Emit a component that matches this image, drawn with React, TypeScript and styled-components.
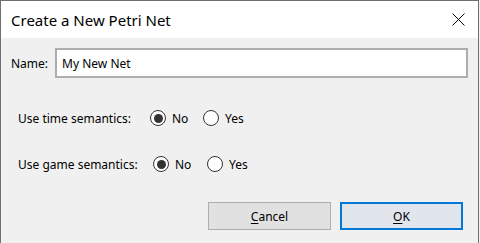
import styled, { createGlobalStyle } from "styled-components";

const Global = createGlobalStyle`
  html, body {
    margin: 0;
    padding: 0;
    background: #f0f0f0;
  }
  body {
    font-family: "Noto Sans", "Open Sans", sans-serif;
    font-size: 12px;
    color: #000;
  }
`;

const Window = styled.div`
  width: 477px;
  height: 242px;
  border: 1px solid #707070;
  border-bottom: none;
  background: #f0f0f0;
  display: flex;
  flex-direction: column;
`;

const TitleBar = styled.div`
  height: 37px;
  background: #fff;
  display: flex;
  align-items: center;
  justify-content: space-between;
  padding-left: 10px;
  padding-right: 13px;
  font-size: 15px;
`;

const Close = styled.svg`
  width: 13px;
  height: 13px;
`;

const Body = styled.div`
  padding: 10px 10px 0 10px;
  display: flex;
  flex-direction: column;
`;

const NameRow = styled.div`
  display: flex;
  align-items: center;
  gap: 7px;
`;

const NameInput = styled.input`
  width: 413px;
  height: 30px;
  box-sizing: border-box;
  border: 2px solid #adadad;
  background: #fff;
  padding: 0 5px;
  font: inherit;
  font-size: 12px;
  outline: none;
`;

const Options = styled.div`
  display: flex;
  flex-direction: column;
  gap: 30px;
  padding: 32px 0 0 7px;
`;

const OptionRow = styled.div`
  display: flex;
  align-items: center;
  height: 16px;
`;

const OptionLabel = styled.span<{ $w: number }>`
  width: ${(p) => p.$w}px;
`;

const Choice = styled.label<{ $w: number }>`
  display: flex;
  align-items: center;
  gap: 6px;
  width: ${(p) => p.$w}px;
`;

const Radio = styled.span<{ $on?: boolean }>`
  width: 14px;
  height: 14px;
  border: 1px solid #333;
  border-radius: 50%;
  background: #fff;
  display: flex;
  align-items: center;
  justify-content: center;
  &::after {
    content: "";
    width: 9px;
    height: 9px;
    border-radius: 50%;
    background: ${(p) => (p.$on ? "#333" : "transparent")};
  }
`;

const Buttons = styled.div`
  display: flex;
  gap: 9px;
  padding: 30px 0 0 197px;
`;

const Button = styled.button<{ $primary?: boolean }>`
  width: 123px;
  height: 28px;
  box-sizing: border-box;
  font: inherit;
  font-size: 12px;
  color: #000;
  background: ${(p) => (p.$primary ? "#e1e6ec" : "#e1e1e1")};
  border: ${(p) => (p.$primary ? "2px solid #0078d7" : "1px solid #adadad")};
  padding: 0;
  u {
    text-underline-offset: 2px;
  }
`;

export default function App() {
  return (
    <>
      <Global />
      <Window>
        <TitleBar>
          <span>Create a New Petri Net</span>
          <Close viewBox="0 0 13 13">
            <path d="M0.5 0.5 L12.5 12.5 M12.5 0.5 L0.5 12.5" stroke="#000" strokeWidth="1" />
          </Close>
        </TitleBar>
        <Body>
          <NameRow>
            <span>Name:</span>
            <NameInput defaultValue="My New Net" />
          </NameRow>
          <Options>
            <OptionRow>
              <OptionLabel $w={132}>Use time semantics:</OptionLabel>
              <Choice $w={53}>
                <Radio $on />
                No
              </Choice>
              <Choice $w={50}>
                <Radio />
                Yes
              </Choice>
            </OptionRow>
            <OptionRow>
              <OptionLabel $w={135}>Use game semantics:</OptionLabel>
              <Choice $w={54}>
                <Radio $on />
                No
              </Choice>
              <Choice $w={50}>
                <Radio />
                Yes
              </Choice>
            </OptionRow>
          </Options>
          <Buttons>
            <Button>
              <u>C</u>ancel
            </Button>
            <Button $primary>
              <u>O</u>K
            </Button>
          </Buttons>
        </Body>
      </Window>
    </>
  );
}
